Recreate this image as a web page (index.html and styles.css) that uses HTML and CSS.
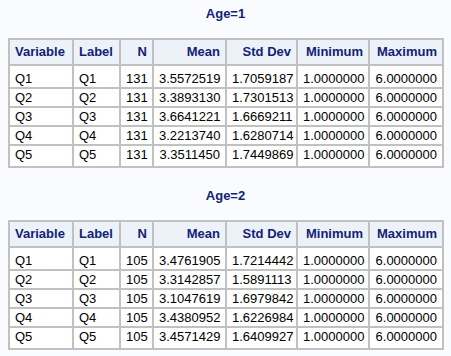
FILE: index.html
```html
<!DOCTYPE html>
<html>
<head>
<meta charset="utf-8">
<link rel="stylesheet" href="styles.css">
</head>
<body>
<section class="group">
  <h2 class="bytitle">Age=1</h2>
  <table class="stats">
    <thead>
      <tr>
        <th class="c-var l">Variable</th><th class="c-lab l">Label</th><th class="c-n r">N</th><th class="c-mean r">Mean</th><th class="c-sd r">Std Dev</th><th class="c-min r">Minimum</th><th class="c-max r">Maximum</th>
      </tr>
    </thead>
    <tbody>
      <tr><td class="l">Q1</td><td class="l">Q1</td><td class="r">131</td><td class="r">3.5572519</td><td class="r">1.7059187</td><td class="r">1.0000000</td><td class="r">6.0000000</td></tr>
      <tr><td class="l">Q2</td><td class="l">Q2</td><td class="r">131</td><td class="r">3.3893130</td><td class="r">1.7301513</td><td class="r">1.0000000</td><td class="r">6.0000000</td></tr>
      <tr><td class="l">Q3</td><td class="l">Q3</td><td class="r">131</td><td class="r">3.6641221</td><td class="r">1.6669211</td><td class="r">1.0000000</td><td class="r">6.0000000</td></tr>
      <tr><td class="l">Q4</td><td class="l">Q4</td><td class="r">131</td><td class="r">3.2213740</td><td class="r">1.6280714</td><td class="r">1.0000000</td><td class="r">6.0000000</td></tr>
      <tr><td class="l">Q5</td><td class="l">Q5</td><td class="r">131</td><td class="r">3.3511450</td><td class="r">1.7449869</td><td class="r">1.0000000</td><td class="r">6.0000000</td></tr>
    </tbody>
  </table>
</section>
<section class="group">
  <h2 class="bytitle">Age=2</h2>
  <table class="stats">
    <thead>
      <tr>
        <th class="c-var l">Variable</th><th class="c-lab l">Label</th><th class="c-n r">N</th><th class="c-mean r">Mean</th><th class="c-sd r">Std Dev</th><th class="c-min r">Minimum</th><th class="c-max r">Maximum</th>
      </tr>
    </thead>
    <tbody>
      <tr><td class="l">Q1</td><td class="l">Q1</td><td class="r">105</td><td class="r">3.4761905</td><td class="r">1.7214442</td><td class="r">1.0000000</td><td class="r">6.0000000</td></tr>
      <tr><td class="l">Q2</td><td class="l">Q2</td><td class="r">105</td><td class="r">3.3142857</td><td class="r">1.5891113</td><td class="r">1.0000000</td><td class="r">6.0000000</td></tr>
      <tr><td class="l">Q3</td><td class="l">Q3</td><td class="r">105</td><td class="r">3.1047619</td><td class="r">1.6979842</td><td class="r">1.0000000</td><td class="r">6.0000000</td></tr>
      <tr><td class="l">Q4</td><td class="l">Q4</td><td class="r">105</td><td class="r">3.4380952</td><td class="r">1.6226984</td><td class="r">1.0000000</td><td class="r">6.0000000</td></tr>
      <tr><td class="l">Q5</td><td class="l">Q5</td><td class="r">105</td><td class="r">3.4571429</td><td class="r">1.6409927</td><td class="r">1.0000000</td><td class="r">6.0000000</td></tr>
    </tbody>
  </table>
</section>
</body>
</html>
```
FILE: styles.css
```css
html, body {
  margin: 0;
  background: #fafbfe;
}
body {
  padding: 6px 8px 0;
  font-family: "Liberation Sans", Arial, sans-serif;
  font-size: 13px;
}
.group {
  margin-bottom: 20px;
}
.bytitle {
  margin: 0 0 16px;
  font-size: 13px;
  line-height: 16px;
  font-weight: bold;
  color: #112277;
  text-align: center;
}
.stats {
  table-layout: fixed;
  width: 436px;
  border-collapse: separate;
  border-spacing: 0;
  border: 1px solid #c1c1c1;
  background: #ffffff;
}
.stats th,
.stats td {
  box-sizing: border-box;
  border: 1px solid #c1c1c1;
  white-space: nowrap;
  overflow: hidden;
}
.stats th {
  background: #edf2f9;
  color: #112277;
  font-weight: bold;
  padding: 4px 5px;
  line-height: 16px;
}
.stats td {
  color: #000000;
  padding: 1px 5px;
  line-height: 15px;
}
.stats tbody tr:first-child td {
  padding-top: 5px;
}
.stats tbody tr:last-child td {
  padding-bottom: 4px;
}
.l { text-align: left; }
.r { text-align: right; }
.c-var { width: 64px; }
.c-lab { width: 47px; }
.c-n { width: 33px; }
.c-mean { width: 73px; }
.c-sd { width: 71px; }
.c-min { width: 72px; }
.c-max { width: 74px; }
```
